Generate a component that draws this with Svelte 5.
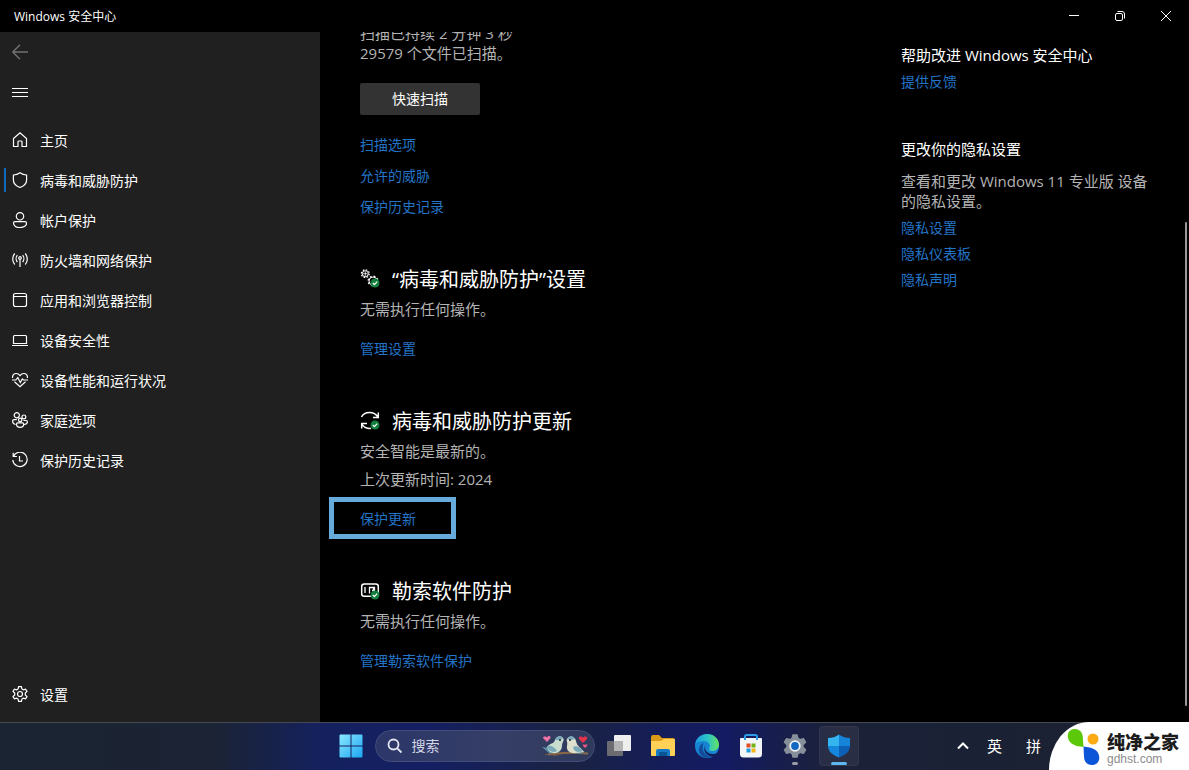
<script lang="ts">
  interface NavItem {
    label: string;
    icon: string;
  }

  const navItems: NavItem[] = [
    { label: '主页', icon: 'M1.500 6.500 8 .8l6.500 5.700v8H10V9.800q0-.8-.8-.8H6.800q-.8 0-.8.8v4.700H1.500z' },
    { label: '病毒和威胁防护', icon: 'M8 .8C6 2.200 4 2.900 1.400 3v5c0 3.400 2.300 5.900 6.600 7.500 4.300-1.600 6.600-4.100 6.600-7.500V3C12 2.900 10 2.200 8 .8z' },
    { label: '帐户保护', icon: 'M8 .6a3.700 3.700 0 1 1 0 7.400 3.700 3.700 0 0 1 0-7.400zM3 9.600h10q1.500 0 1.500 1.500c0 3-2.800 4.400-6.500 4.400s-6.500-1.400-6.500-4.400q0-1.500 1.500-1.500z' },
    { label: '防火墙和网络保护', icon: 'M8 6.500v8.500M8 4.700a1.300 1.300 0 1 1 0 2.600 1.300 1.300 0 0 1 0-2.600zM5.400 3.200C3.700 5 3.700 8 5.400 10M10.600 3.200c1.700 1.800 1.700 4.800 0 6.800M2.800 1.500C0 4.500 0 9.500 2.800 12.500M13.200 1.500c2.800 3 2.800 8 0 11' },
    { label: '应用和浏览器控制', icon: 'M3.500 1.500h9q2 0 2 2v9q0 2-2 2h-9q-2 0-2-2v-9q0-2 2-2zM1.500 4.500h13' },
    { label: '设备安全性', icon: 'M2.500 3.500h11q1 0 1 1v7h-13v-7q0-1 1-1zM0 13.500h16' },
    { label: '设备性能和运行状况', icon: 'M.6 6C.2 3.200 2 1.500 4.200 1.500 6 1.500 7.200 2.500 8 3.600c.8-1.100 2-2.100 3.800-2.100 2.200 0 4 1.700 3.600 4.500M0 8h3.800l2-2.500 2.500 5 2-3.500 1.200 1H16M2.500 9.800 8 14.700l5.500-4.900' },
    { label: '家庭选项', icon: 'M4.800.6a2.600 2.600 0 1 1 0 5.200 2.600 2.600 0 0 1 0-5.200zM11.900 3a1.900 1.900 0 1 1 0 3.800 1.900 1.900 0 0 1 0-3.800zM8.200 6.200a1.700 1.700 0 1 1 0 3.400 1.700 1.700 0 0 1 0-3.400zM4.800 7.700H2Q.6 7.700.6 9c0 2 1.200 3.200 3 3.500M11.500 8.500H14q1.400 0 1.400 1.200c0 1.700-1.400 2.600-3.200 2.800M5.700 10.900h4.800q1.200 0 1.200 1.200c0 2.200-1.600 3.300-3.600 3.300s-3.600-1.100-3.600-3.300q0-1.200 1.200-1.200z' },
    { label: '保护历史记录', icon: 'M1.200.8v3.700h3.700M1.500 4.200A7.200 7.200 0 1 1 .8 8M7.500 4v5H11' },
  ];

  const gear =
    'M6.600.7h2.800l.5 2.200 1.500.9 2.200-.7 1.400 2.400-1.700 1.600v1.800l1.700 1.600-1.400 2.400-2.200-.7-1.500.9-.5 2.200H6.600l-.5-2.200-1.500-.9-2.200.7L1 10.500l1.700-1.600V7.100L1 5.500l1.400-2.400 2.200.7 1.500-.9z';

  const privacyLinks = ['隐私设置', '隐私仪表板', '隐私声明'];
  const scanLinks = ['扫描选项', '允许的威胁', '保护历史记录'];

  let active = $state('病毒和威胁防护');
</script>

{#snippet okBadge()}
  <circle class="badge" cx="15" cy="14" r="4.500" />
  <path d="m12.800 14 1.600 1.600 2.800-3" stroke-width="1.200" />
{/snippet}

<div class="screen">
  <header class="titlebar">
    <span class="title">Windows 安全中心</span>
    <div class="window-buttons">
      <button aria-label="最小化"><svg width="12" height="12" viewBox="0 0 12 12"><path d="M1 5.500h10" /></svg></button>
      <button aria-label="还原">
        <svg width="12" height="12" viewBox="0 0 12 12"><rect x="1.500" y="3.500" width="7" height="7" rx="1.500" /><path d="M3.500 1.500H8q2.500 0 2.500 2.500v4.500" /></svg>
      </button>
      <button aria-label="关闭"><svg width="12" height="12" viewBox="0 0 12 12"><path d="m1 1 10 10M11 1 1 11" /></svg></button>
    </div>
  </header>

  <div class="body">
    <aside class="sidebar">
      <button class="row back" aria-label="返回"><svg width="16" height="16" viewBox="0 0 16 16"><path d="M16 8H.8M8 .8.8 8 8 15.200" /></svg></button>
      <button class="row menu" aria-label="菜单"><svg width="16" height="16" viewBox="0 0 16 16"><path d="M0 4.500h16M0 8.500h16M0 12.500h16" /></svg></button>
      <nav>
        {#each navItems as item}
          <button class="row" class:active={active === item.label} onclick={() => (active = item.label)}>
            <svg width="16" height="16" viewBox="0 0 16 16"><path d={item.icon} /></svg>
            <span>{item.label}</span>
          </button>
        {/each}
      </nav>
      <button class="row settings">
        <svg width="16" height="16" viewBox="0 0 16 16"><path d={gear} /><circle cx="8" cy="8" r="2.500" /></svg>
        <span>设置</span>
      </button>
    </aside>

    <main>
      <div class="content">
        <section>
          <p>扫描已持续 2 分钟 3 秒<br />29579 个文件已扫描。</p>
          <button class="scan">快速扫描</button>
          <ul class="scan-links">
            {#each scanLinks as link}
              <li><a href="#scan">{link}</a></li>
            {/each}
          </ul>
        </section>

        <section>
          <h2>
            <svg width="20" height="20" viewBox="0 0 20 20">
              <circle cx="5.300" cy="4.700" r="3" />
              <circle cx="5.300" cy="4.700" r="3.900" stroke-width="1.200" stroke-dasharray="1.600 1.460" />
              <path d="M5.300 2.500v4.400M3.100 4.700h4.400" stroke-width=".8" />
              <circle cx="13" cy="12" r="4" />
              <circle cx="13" cy="12" r="4.900" stroke-width="1.200" stroke-dasharray="1.900 1.950" />
              {@render okBadge()}
            </svg>
            “病毒和威胁防护”设置
          </h2>
          <p>无需执行任何操作。</p>
          <a class="action" href="#manage">管理设置</a>
        </section>

        <section>
          <h2>
            <svg width="20" height="20" viewBox="0 0 20 20">
              <path d="M1.500 6C3 3 6 1.400 9.500 1.400c3.600 0 6.600 1.600 8.500 4.600M18.300 1.500v5H13M1.700 17.500v-5H7M1.700 12.800c1.700 3 4.700 4.700 8.300 4.700h1" stroke-width="1.500" />
              {@render okBadge()}
            </svg>
            病毒和威胁防护更新
          </h2>
          <p>安全智能是最新的。</p>
          <p class="updated">上次更新时间: 2024</p>
          <a class="action highlighted" href="#updates">保护更新</a>
        </section>

        <section>
          <h2>
            <svg width="20" height="20" viewBox="0 0 20 20">
              <rect x="1.700" y="3" width="16.600" height="12.200" rx="2.500" stroke-width="1.500" />
              <path d="M5 6v6M9.500 6v6.500M9 6.500h5.500v3H12M13.500 6v4" stroke-width="1.300" />
              {@render okBadge()}
            </svg>
            勒索软件防护
          </h2>
          <p>无需执行任何操作。</p>
          <a class="action" href="#ransomware">管理勒索软件保护</a>
        </section>
      </div>

      <aside class="help">
        <h3>帮助改进 Windows 安全中心</h3>
        <a href="#feedback">提供反馈</a>
        <h3 class="privacy">更改你的隐私设置</h3>
        <p>查看和更改 Windows 11 专业版 设备的隐私设置。</p>
        <ul>
          {#each privacyLinks as link}
            <li><a href="#privacy">{link}</a></li>
          {/each}
        </ul>
      </aside>
      <div class="scrollbar"></div>
    </main>
  </div>

  <footer class="taskbar">
    <div class="apps">
      <button class="app" aria-label="开始">
        <svg width="24" height="24" viewBox="0 0 24 24">
          <defs>
            <linearGradient id="win" x1="0" y1="0" x2="1" y2="1"><stop offset="0" stop-color="#8be8ff" /><stop offset="1" stop-color="#1ba5f2" /></linearGradient>
          </defs>
          <path fill="url(#win)" d="M1.500.5h10v11H.5v-10q0-1 1-1zM12.500.5h10q1 0 1 1v10h-11zM.5 12.500h11v11h-10q-1 0-1-1zM12.500 12.500h11v10q0 1-1 1h-10z" />
        </svg>
      </button>
      <label class="search">
        <svg width="16" height="16" viewBox="0 0 16 16"><circle cx="6.500" cy="6.500" r="5" /><path d="m10.300 10.300 4.200 4.200" /></svg>
        <input type="text" placeholder="搜索" aria-label="搜索" />
        <svg class="birds" width="48" height="22" viewBox="0 0 48 22">
          <path d="M7 19.500q17-3 40-1" stroke="#8a6a4a" stroke-width="2" />
          <path d="m4 20 8-2M20 19l-8 2" stroke="#74573e" stroke-width="1" />
          <path fill="#5d8ea5" d="m1 12 8 1 5 3-5 3z" />
          <path fill="#c9dccf" d="M6 12c3-4 7-3 8-7 1-4 6-5 8-2 2 2-1 4-1 8 0 5-5 8-9 7-3 0-5-3-6-6z" />
          <path fill="#79a9b8" d="M6 11c4-1 8 1 10 5-4 2-8 1-10-5zM14 5c1-4 6-5 8-2l-3 2z" />
          <path fill="#5d8ea5" d="m44 17-8-3-3 3 4 2z" />
          <path fill="#dce0cc" d="M43 17c-2-4-7-5-8-11-1-5-7-6-9-2-1 2 1 3 0 7-1 5 4 8 9 7z" />
          <path fill="#79a9b8" d="M42 16c-3-4-7-6-10-4 1 5 5 6 10 4zM34 4c-2-4-6-3-8 0l4 1z" />
          <circle cx="19" cy="5" r="1" fill="#1c2733" /><circle cx="29" cy="5" r="1" fill="#1c2733" />
          <path fill="#f272a8" d="m6 7-4-4c0-2 3-2 4-.5C7.500 0 10 1 9.500 3z" />
          <path fill="#e7334c" d="m42 8-4-4c-1-3 3-3 4-1 1-2 5-2 4 1z" />
          <path fill="#ef5686" d="m44 13-2-2c0-2 1-2 2-1 1-1 3-1 2 1z" />
        </svg>
      </label>
      <button class="app" aria-label="任务视图">
        <svg width="26" height="24" viewBox="0 0 26 24">
          <rect x="8" y="1" width="17" height="16" rx="1" fill="#eee" />
          <rect x="1" y="7" width="16" height="15" rx="1" fill="#6c6c70" />
          <path fill="#b4b4b4" d="M8 7h9v10H8z" />
        </svg>
      </button>
      <button class="app" aria-label="文件资源管理器">
        <svg width="26" height="24" viewBox="0 0 26 24">
          <path fill="#dc9a16" d="M1 3q0-2 2-2h6l3 3h11q2 0 2 2v7H1z" />
          <path fill="#ffd257" d="M1 8q0-1 1-1h9l3-2h10q1 0 1 1v15q0 1-1 1H2q-1 0-1-1z" />
          <path fill="#1579c9" d="M6 22v-5q0-2 2-2h10q2 0 2 2v5z" />
          <path fill="#0a5594" d="M9 18h8v4H9z" />
        </svg>
      </button>
      <button class="app" aria-label="Edge">
        <svg width="24" height="24" viewBox="0 0 24 24">
          <defs>
            <linearGradient id="edge" x1="0" y1="0" x2="1" y2="0"><stop offset="0" stop-color="#1c9de0" /><stop offset=".55" stop-color="#2cc5c4" /><stop offset="1" stop-color="#66e05d" /></linearGradient>
          </defs>
          <circle cx="12" cy="12" r="12" fill="#1785d4" />
          <path fill="url(#edge)" d="M.2 10C1.500 3.500 6.500 0 12 0c7 0 12 5 12 10.500 0 4-3 6.500-6.500 6.500-3 0-4.500-1.200-3-3.500 1.800-3-1.500-6.500-6-6.500C5 7 2 8 .2 10z" />
          <path fill="#134c98" d="M8.500 9C6 15 9 22 17 22.800 11 26 2 21.500 4.200 14c.7-2.500 2.300-4.200 4.300-5z" />
          <path fill="#14205c" d="M11 10c-3 5 1 10 7 10 2 0 3.500-.6 4.500-1.500-1 2.500-3 4-5.500 4.400C9.500 21 7.500 15.500 11 10z" />
        </svg>
      </button>
      <button class="app" aria-label="Microsoft Store">
        <svg width="24" height="24" viewBox="0 0 24 24">
          <path d="M6 6V2.500Q6 1 7.500 1h9Q18 1 18 2.500V6" stroke="#2d9be5" stroke-width="2" />
          <path fill="#f3f6f8" d="M2 4h20q1 0 1 1v15q0 3.500-3.500 3.500h-15Q1 23.500 1 20V5q0-1 1-1z" />
          <path stroke="#2d9be5" stroke-width="2" d="M6 4v2M18 4v2" />
          <path fill="#e34b23" d="M7.500 9.500h4v4h-4z" /><path fill="#75b01a" d="M12.500 9.500h4v4h-4z" />
          <path fill="#1e9be0" d="M7.500 14.500h4v4h-4z" /><path fill="#f5b51a" d="M12.500 14.500h4v4h-4z" />
        </svg>
      </button>
      <button class="app running" aria-label="设置">
        <svg width="24" height="24" viewBox="0 0 16 16">
          <path fill="#87909a" d={gear} stroke="#87909a" stroke-width="1" stroke-linejoin="round" />
          <circle cx="8" cy="8" r="3.800" fill="#eef3f6" /><circle cx="8" cy="8" r="2.600" fill="#1268c0" />
        </svg>
      </button>
      <button class="app running current" aria-label="Windows 安全中心">
        <svg width="24" height="24" viewBox="0 0 24 24">
          <path fill="#35b5f0" d="M12 .5C9 3 5 4 1 4v8h11z" /><path fill="#1583d8" d="M12 .5C15 3 19 4 23 4v8H12z" />
          <path fill="#1487dc" d="M1 12h11v11.500C5 21 1 17 1 12z" /><path fill="#0b5fb4" d="M23 12H12v11.500C19 21 23 17 23 12z" />
        </svg>
      </button>
    </div>

    <div class="tray">
      <button class="chevron" aria-label="显示隐藏的图标"><svg width="16" height="16" viewBox="0 0 16 16"><path d="m3 10.500 5-5 5 5" /></svg></button>
      <span class="lang">英</span>
      <span>拼</span>
      <div class="brand">
        <svg width="38" height="48" viewBox="0 0 38 48">
          <path fill="#5cc80a" d="M20.500 25C16 24.500 11 24 7.500 20.500 3 16 4 7.500 11 7c5-.4 8.500 2.800 8.800 8z" />
          <circle cx="30" cy="17" r="5.500" fill="#fbaa13" />
          <path fill="#0d55d8" d="M20.500 24.500c4 .8 8.500 1 12 3.500C38 32 38 42.500 29.500 43c-5 .3-8.300-3-8.500-8z" />
        </svg>
        <div class="brand-text">
          <strong>纯净之家</strong>
          <small>gdhst.com</small>
        </div>
      </div>
    </div>
  </footer>
</div>

<style>
  :global(body) {
    margin: 0;
    background: #000;
  }

  .screen {
    display: grid;
    grid-template-rows: 32px 1fr 48px;
    height: 100vh;
    min-width: 960px;
    overflow: hidden;
    color: #fff;
    font-family: 'Open Sans', 'Noto Sans CJK SC', sans-serif;
    font-size: 14px;
    line-height: 20px;
  }

  button {
    display: flex;
    align-items: center;
    margin: 0;
    padding: 0;
    border: 0;
    background: none;
    color: inherit;
    font: inherit;
  }

  svg {
    display: block;
    flex: none;
    fill: none;
  }

  h2,
  h3,
  p,
  ul {
    margin: 0;
    padding: 0;
    list-style: none;
    font-weight: 400;
  }

  a {
    display: block;
    width: fit-content;
    color: #2374c6;
    text-decoration: none;
  }

  .titlebar {
    display: flex;
    justify-content: space-between;
    align-items: center;
    padding-left: 14px;
    font-size: 12px;
  }

  .title,
  .row span {
    padding-top: 2px;
  }

  .window-buttons {
    display: flex;
  }

  .window-buttons button {
    justify-content: center;
    width: 46px;
    height: 32px;
  }

  .window-buttons svg,
  .row svg,
  h2 svg {
    stroke: #fff;
  }

  .body {
    display: grid;
    grid-template-columns: 320px 1fr;
    min-height: 0;
  }

  .sidebar {
    display: flex;
    flex-direction: column;
    padding-bottom: 8px;
    background: #202020;
  }

  nav {
    margin-top: 8px;
  }

  .row {
    position: relative;
    gap: 12px;
    width: 100%;
    height: 40px;
    padding-left: 12px;
  }

  .row svg {
    stroke-width: 1.2;
  }

  .row.menu svg {
    stroke-width: 1;
  }

  .row.back svg {
    stroke: #707070;
    stroke-width: 1.5;
  }

  .row.active::before {
    content: '';
    position: absolute;
    left: 4px;
    width: 2px;
    height: 24px;
    background: #0f6cbd;
  }

  .settings {
    margin-top: auto;
  }

  main {
    position: relative;
    display: grid;
    grid-template-columns: 1fr 248px;
    padding: 0 40px;
    overflow: hidden;
  }

  /* scrolled a little past its first line */
  .content {
    margin-top: -9px;
  }

  section + section {
    margin-top: 48px;
  }

  p {
    color: #b4b4b4;
    font-size: 15px;
  }

  .scan {
    justify-content: center;
    width: 120px;
    height: 32px;
    margin-top: 20px;
    border-radius: 2px;
    background: #333;
  }

  .scan-links {
    display: grid;
    gap: 11px;
    margin-top: 20px;
  }

  h2 {
    display: flex;
    gap: 12px;
    margin-bottom: 4px;
    font-size: 20px;
    line-height: 30px;
  }

  h2 svg {
    margin-top: 4px;
  }

  .badge {
    fill: #12803c;
    stroke: none;
  }

  .updated {
    margin-top: 8px;
  }

  .action {
    margin-top: 20px;
  }

  .highlighted {
    position: relative;
  }

  .highlighted::after {
    content: '';
    position: absolute;
    inset: -12px -40px -10px -31px;
    border: 5px solid #67abdd;
  }

  .help {
    padding-top: 13px;
  }

  .help h3 {
    margin-bottom: 7px;
    font-size: 15px;
  }

  .help .privacy {
    margin-top: 47px;
    margin-bottom: 12px;
  }

  .help ul {
    display: grid;
    gap: 6px;
    margin-top: 7px;
  }

  .scrollbar {
    position: absolute;
    top: 190px;
    right: 2px;
    bottom: 16px;
    width: 2px;
    border-radius: 1px;
    background: #9a9a9a;
  }

  .taskbar {
    display: grid;
    grid-template-columns: 1fr auto 1fr;
    box-sizing: border-box;
    background: linear-gradient(90deg, #1b2432 0%, #1b2334 18%, #14215e 27%, #141f62 36%, #1a2342 48%, #151d5a 56%, #141b62 61%, #1b2138 70%, #1b2230 100%);
    box-shadow: inset 0 1px #454a55;
  }

  .apps {
    grid-column: 2;
    display: flex;
    align-items: center;
    gap: 4px;
  }

  .app {
    position: relative;
    justify-content: center;
    width: 40px;
    height: 40px;
    border-radius: 4px;
  }

  .app.current {
    background: #ffffff10;
    box-shadow: inset 0 0 0 1px #ffffff0c;
  }

  .app.running::after {
    content: '';
    position: absolute;
    bottom: 1px;
    width: 6px;
    height: 3px;
    border-radius: 2px;
    background: #9a9ca4;
  }

  .app.current::after {
    width: 16px;
    background: #5cb8ee;
  }

  .search {
    display: flex;
    align-items: center;
    gap: 9px;
    box-sizing: border-box;
    width: 220px;
    height: 32px;
    padding: 0 5px 0 11px;
    border: 1px solid #434c7a;
    border-radius: 16px;
    background: linear-gradient(90deg, #2c3669, #353f66 60%, #303a5c);
  }

  .search > svg:first-child {
    stroke: #e4e6f2;
    stroke-width: 1.8;
  }

  .search input {
    flex: 1;
    min-width: 0;
    padding: 0;
    border: 0;
    outline: 0;
    background: none;
    color: #fff;
    font: inherit;
  }

  .search input::placeholder {
    color: #d4d7e6;
    opacity: 1;
  }

  .tray {
    display: flex;
    justify-content: flex-end;
    align-items: center;
    font-size: 15px;
  }

  .chevron {
    margin-right: 16px;
  }

  .chevron svg {
    stroke: #fff;
    stroke-width: 2;
  }

  .lang {
    margin-right: 24px;
  }

  .brand {
    display: flex;
    gap: 6px;
    box-sizing: border-box;
    width: 140px;
    height: 48px;
    margin-left: 8px;
    padding-left: 14px;
    border-top-left-radius: 40px 48px;
    background: #fff;
  }

  .brand-text {
    display: flex;
    flex-direction: column;
    padding-top: 10px;
    white-space: nowrap;
  }

  .brand strong {
    color: #1c1c1c;
    font-size: 18px;
    font-weight: 900;
    line-height: 20px;
  }

  .brand small {
    color: #8c8c8c;
    font-family: 'Liberation Sans', Arial, sans-serif;
    font-size: 12px;
    line-height: 14px;
  }
</style>
